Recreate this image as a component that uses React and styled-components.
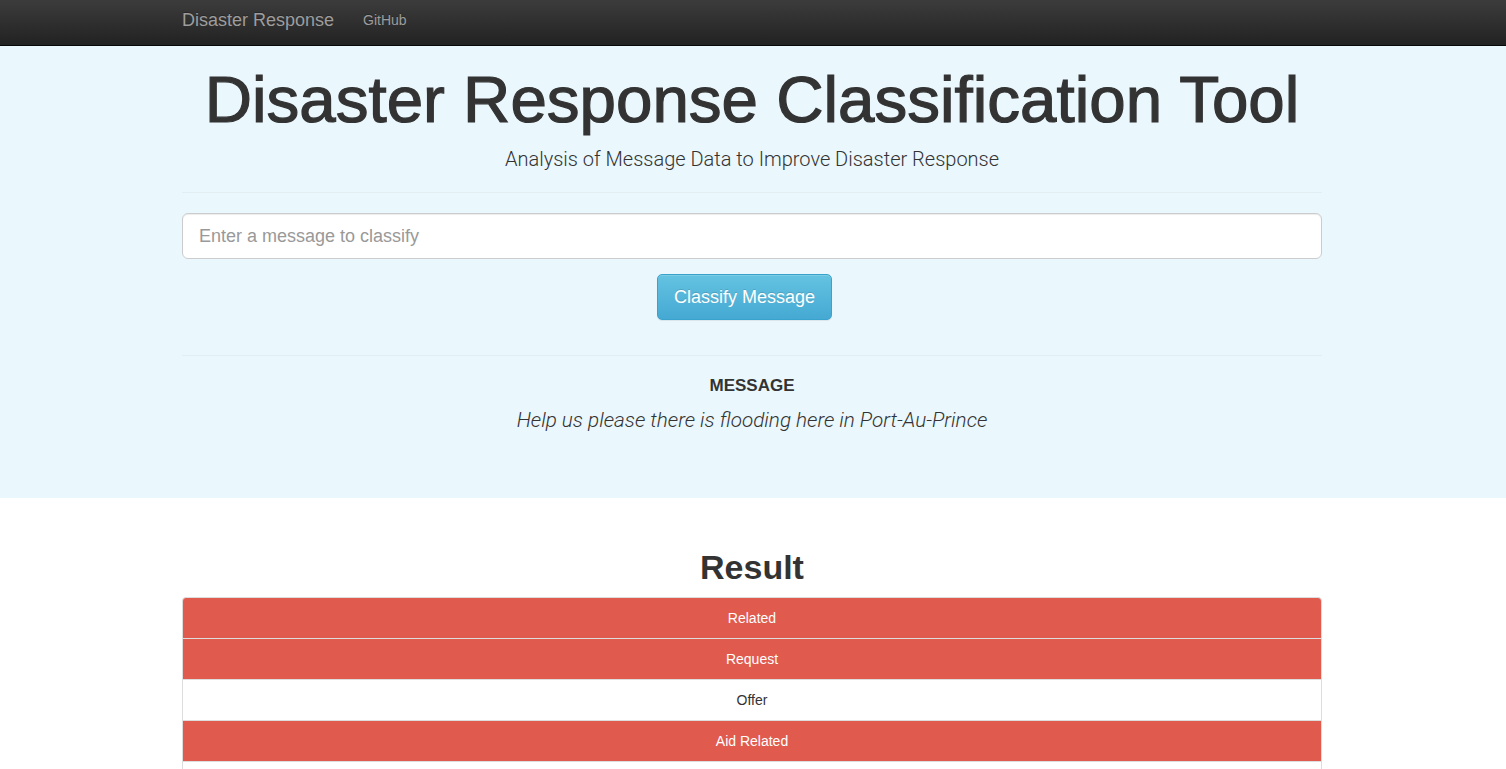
import React from "react";
import styled, { createGlobalStyle } from "styled-components";

const GlobalStyle = createGlobalStyle`
  html, body {
    margin: 0;
    padding: 0;
    background: #fff;
    color: #333;
    font-family: "Liberation Sans", Arial, Helvetica, sans-serif;
    font-size: 14px;
    line-height: 1.42857;
  }
  * { box-sizing: border-box; }
`;

const Navbar = styled.nav`
  height: 46px;
  background-image: linear-gradient(to bottom, #3c3c3c 0, #222 100%);
  border-bottom: 1px solid #080808;
`;

const Container = styled.div`
  width: 1140px;
  margin: 0 auto;
  position: relative;
  left: -1px;
`;

const NavInner = styled(Container)`
  display: flex;
  align-items: center;
  height: 45px;
  padding-bottom: 4px;
`;

const Brand = styled.a`
  font-size: 18px;
  color: #9d9d9d;
  text-decoration: none;
  margin-right: 29px;
  text-shadow: 0 -1px 0 rgba(0, 0, 0, 0.25);
`;

const NavLink = styled.a`
  font-size: 14px;
  color: #9d9d9d;
  text-decoration: none;
  text-shadow: 0 -1px 0 rgba(0, 0, 0, 0.25);
`;

const Jumbotron = styled.header`
  background: #eaf7fc;
  padding: 18px 0 63px;
`;

const Title = styled.h1`
  margin: 0;
  font-size: 65.5px;
  font-weight: 400;
  line-height: 1.1;
  text-align: center;
  color: #333;
  -webkit-text-stroke: 1.2px #333;
`;

const Lead = styled.p`
  margin: 9px 0 0;
  font-family: Roboto, "Liberation Sans", sans-serif;
  font-size: 20px;
  font-weight: 300;
  line-height: 1.4;
  text-align: center;
  color: #333;
`;

const Rule = styled.hr`
  border: 0;
  border-top: 1px solid #e2eef2;
  margin: ${(p) => p.$top}px 0 ${(p) => p.$bottom}px;
`;

const Form = styled.form`
  display: flex;
  flex-direction: column;
  align-items: flex-start;
  gap: 15px;
`;

const Input = styled.input`
  width: 100%;
  height: 46px;
  padding: 10px 16px;
  font-size: 18px;
  font-family: inherit;
  color: #555;
  background: #fff;
  border: 1px solid #ccc;
  border-radius: 6px;
  box-shadow: inset 0 1px 1px rgba(0, 0, 0, 0.075);
  outline: none;
  &::placeholder { color: #999; }
`;

const Button = styled.button`
  margin-left: 475px;
  width: 175px;
  height: 46px;
  padding: 10px 0;
  font-size: 18px;
  font-family: inherit;
  color: #fff;
  background-image: linear-gradient(to bottom, #64c3e1 0, #45a9d3 100%);
  border: 1px solid #3aa3cc;
  border-radius: 5px;
  text-shadow: 0 -1px 0 rgba(0, 0, 0, 0.15);
  box-shadow: inset 0 1px 0 rgba(255, 255, 255, 0.15), 0 1px 1px rgba(0, 0, 0, 0.075);
  cursor: pointer;
`;

const MessageLabel = styled.h4`
  margin: 0;
  font-size: 17px;
  font-weight: 700;
  line-height: 1.1;
  text-align: center;
  color: #333;
`;

const MessageText = styled.p`
  margin: 10px 0 0;
  font-family: Roboto, "Liberation Sans", sans-serif;
  font-size: 20.7px;
  font-weight: 300;
  font-style: italic;
  line-height: 1.4;
  text-align: center;
  color: #333;
`;

const ResultTitle = styled.h2`
  margin: 51px 0 11px;
  font-size: 34px;
  font-weight: 700;
  line-height: 1.1;
  text-align: center;
  color: #333;
`;

const List = styled.ul`
  list-style: none;
  margin: 0;
  padding: 0;
`;

const Item = styled.li`
  padding: 10px 15px;
  margin-bottom: -1px;
  font-size: 14px;
  line-height: 20px;
  text-align: center;
  border: 1px solid #ddd;
  background: ${(p) => (p.$hit ? "#e05a4e" : "#fff")};
  color: ${(p) => (p.$hit ? "#fff" : "#333")};
  &:first-child {
    border-top-left-radius: 4px;
    border-top-right-radius: 4px;
  }
`;

const results = [
  ["Related", true],
  ["Request", true],
  ["Offer", false],
  ["Aid Related", true],
  ["Medical Help", false],
  ["Medical Products", false],
  ["Search And Rescue", false],
  ["Security", false],
];

export default function App() {
  return (
    <>
      <GlobalStyle />
      <Navbar>
        <NavInner>
          <Brand href="#">Disaster Response</Brand>
          <NavLink href="#">GitHub</NavLink>
        </NavInner>
      </Navbar>
      <Jumbotron>
        <Container>
          <Title>Disaster Response Classification Tool</Title>
          <Lead>Analysis of Message Data to Improve Disaster Response</Lead>
          <Rule $top={19} $bottom={20} />
          <Form onSubmit={(e) => e.preventDefault()}>
            <Input type="text" placeholder="Enter a message to classify" />
            <Button type="submit">Classify Message</Button>
          </Form>
          <Rule $top={35} $bottom={21} />
          <MessageLabel>MESSAGE</MessageLabel>
          <MessageText>Help us please there is flooding here in Port-Au-Prince</MessageText>
        </Container>
      </Jumbotron>
      <Container>
        <ResultTitle>Result</ResultTitle>
        <List>
          {results.map(([name, hit]) => (
            <Item key={name} $hit={hit}>
              {name}
            </Item>
          ))}
        </List>
      </Container>
    </>
  );
}
